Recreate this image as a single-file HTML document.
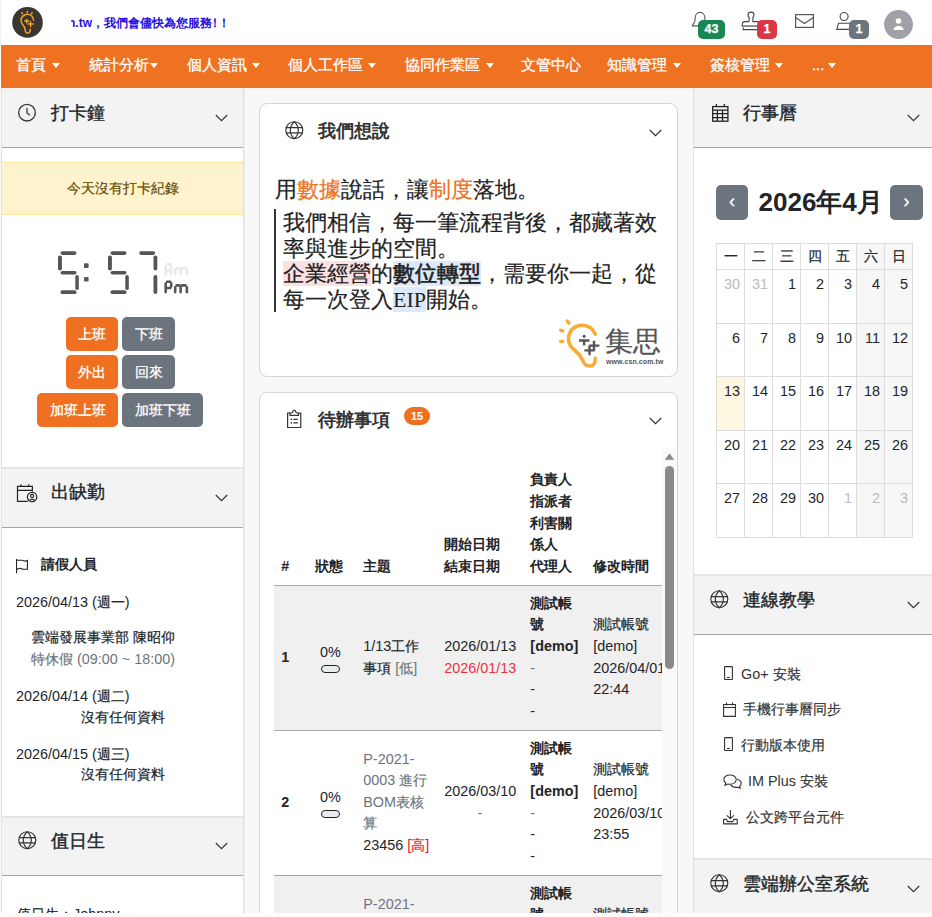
<!DOCTYPE html>
<html><head><meta charset="utf-8">
<style>
*{box-sizing:border-box;margin:0;padding:0}
html,body{width:932px;height:917px;overflow:hidden;background:#fff}
body{position:relative;font-family:"Liberation Sans",sans-serif;font-size:14.4px;line-height:1.5;color:#212529}
.a{position:absolute}
.nw{white-space:nowrap}
/* top header */
#top{left:0;top:0;width:932px;height:45px;background:#fff;border-left:1px solid #f2f2f2}
#nav{left:1px;top:45px;width:931px;height:43px;background:#ee7222}
.ni{top:10px;color:#fff;font-size:14.8px;line-height:21px;white-space:nowrap;-webkit-text-stroke:0.3px #fff}
.car{position:absolute;top:17.5px;width:0;height:0;border-left:4px solid transparent;border-right:4px solid transparent;border-top:5px solid #fff}
#main{left:0;top:88px;width:932px;height:825px;background:#f8f8f8}
#bot{left:0;top:913px;width:932px;height:4px;background:#fcfcfc}
.col{background:#fff;overflow:hidden}
.hd{position:absolute;left:0;background:#f3f3f3;border-bottom:1px solid #a3a3ab}
.hdt{position:absolute;font-size:18px;line-height:24px;color:#212529;font-weight:400;-webkit-text-stroke:0.4px #212529;white-space:nowrap}
.sep{position:absolute;left:0;height:2px;background:#e5e5e7}
.chev{position:absolute;width:13px;height:8px}
.card{position:absolute;background:#fff;border:1px solid #d6d6da;border-radius:8px;overflow:hidden}
.btn{position:absolute;height:34px;border-radius:5px;color:#fff;font-size:14.4px;line-height:34px;text-align:center;white-space:nowrap;-webkit-text-stroke:0.3px #fff}
.bo{background:#ee7020}
.bg{background:#6c757d}

.tt{border-collapse:collapse;table-layout:fixed;width:411.9px;font-size:14.4px;line-height:21.6px;color:#212529}
.tt td{padding:0 7.2px;vertical-align:middle;white-space:nowrap;overflow:hidden}
.th td{font-weight:bold;vertical-align:bottom;padding-bottom:7.2px;border-bottom:1px solid #aaa}
.r1 td{background:#f0f0f0;border-bottom:1px solid #aaa}
.r2 td{background:#fff;border-bottom:1px solid #aaa}
.tt td.c{text-align:center}
.gy{color:#6c757d}
.rd{color:#e8334a}
.rd2{color:#e8182c}

.cal{border-collapse:collapse;table-layout:fixed;font-size:14.4px;color:#212529}
.cal td{width:28px;border:1px solid #ddd;text-align:right;vertical-align:top;padding:4px 4px 0 0;height:53.6px;line-height:21.6px}
.cal tr.ch td{height:26px;text-align:center;padding:0;line-height:24px}
.cal td.we{background:#f7f7f7}
.cal td.ot{color:#bbb}
.cal td.td{background:#fff8e0}
[style*="font-weight:bold"],b,.th td{-webkit-text-stroke:0}
.k{-webkit-text-stroke:0.2px currentColor}
.hdt .k,.ni .k,.btn .k,[style*="text-stroke"] .k{-webkit-text-stroke:inherit}
b .k,.th .k,[style*="font-weight:bold"] .k{-webkit-text-stroke:0}
</style></head><body>
<div id="top" class="a"></div>
<div id="nav" class="a"></div>

<!-- logo -->
<svg class="a" style="left:12px;top:7px" width="31" height="31" viewBox="0 0 31 31">
<circle cx="15.5" cy="15.4" r="15.3" fill="#3a3632"/>
<g fill="none" stroke="#f5a21f" stroke-width="1.5" stroke-linecap="round">
<path d="M21.6 13.2C21 9.5 18.5 7.3 15.4 7.3C11.8 7.3 9 10 9 13.5C9 16.3 11 18 12.3 20C13.2 21.5 13.2 23.5 13.5 24.5C13.9 25.8 14.7 26.2 15.6 26.2C17 26.2 18.3 25 18.3 22.3"/>
<path d="M9.9 5.6l.5 1M15.4 4.6v.8M20 5.6l-.5 1"/>
<path d="M12.8 14.1h3.8M14.7 12.4v3.4M16 17.1h5.2M18.6 14.8v4.8"/>
</g>
</svg>
<div class="a" style="left:71px;top:14px;width:170px;height:18px;overflow:hidden">
<div class="a nw" style="left:-3px;top:0;font-size:12px;line-height:18px;font-weight:bold;color:#2a10e0">n.tw<span class="k">，我們會儘快為您服務</span><span style="margin-left:-3.5px;letter-spacing:-2.5px"><span class="k">！！</span></span></div>
</div>
<!-- bell -->
<svg class="a" style="left:690px;top:11px" width="20" height="18" viewBox="0 0 20 18">
<path d="M2.4 14.9C2.4 13.6 3.3 13 4.5 11.5C5 10.8 5.1 9 5.1 7.5C5.1 4 7.2 1.5 10 1.3C12.8 1.5 14.9 4 14.9 7.5C14.9 9 15 10.8 15.5 11.5C16.7 13 17.6 13.6 17.6 14.9Z" fill="none" stroke="#555" stroke-width="1.1"/>
</svg>
<div class="a" style="left:698px;top:20px;width:27px;height:19px;background:#198754;border-radius:5px;color:#fff;font-weight:bold;font-size:12.5px;line-height:19px;text-align:center;-webkit-text-stroke:0.25px #fff">43</div>
<!-- stamp -->
<svg class="a" style="left:741px;top:11px" width="20" height="20" viewBox="0 0 20 20">
<path d="M8.1 10.6V6.2C7.3 5.6 7 4.8 7 4C7 2.3 8.3 1.1 10 1.1C11.7 1.1 13 2.3 13 4C13 4.8 12.7 5.6 11.9 6.2V10.6H19M8.1 10.6H4C2.5 10.6 1.3 11.8 1.3 13.3V15.2H19" fill="none" stroke="#444" stroke-width="1.1"/>
<path d="M2.2 16.4V18.6H19" fill="none" stroke="#444" stroke-width="1.1"/>
<path d="M2 14.8H19" stroke="#999" stroke-width="1.4"/>
</svg>
<div class="a" style="left:757px;top:20px;width:20px;height:19px;background:#dc3545;border-radius:5px;color:#fff;font-weight:bold;font-size:12.5px;line-height:19px;text-align:center;-webkit-text-stroke:0.25px #fff">1</div>
<!-- mail -->
<svg class="a" style="left:795px;top:14px" width="19" height="14" viewBox="0 0 19 14">
<rect x="0.6" y="0.6" width="17.8" height="12.8" fill="none" stroke="#555" stroke-width="1.2"/>
<path d="M0.6 3.6l8.9 6 8.9-6" fill="none" stroke="#555" stroke-width="1.2"/>
</svg>
<!-- person -->
<svg class="a" style="left:836px;top:12px" width="16" height="18" viewBox="0 0 16 18">
<circle cx="8.1" cy="4.5" r="4" fill="none" stroke="#444" stroke-width="1.1"/>
<path d="M16 11.2H2.5L0.8 17.4H16" fill="none" stroke="#444" stroke-width="1.1"/>
</svg>
<div class="a" style="left:849px;top:20px;width:20px;height:19px;background:#6c757d;border-radius:5px;color:#fff;font-weight:bold;font-size:12.5px;line-height:19px;text-align:center;-webkit-text-stroke:0.25px #fff">1</div>
<!-- avatar -->
<svg class="a" style="left:884px;top:10px" width="29" height="29" viewBox="0 0 29 29">
<circle cx="14.5" cy="14.5" r="14.4" fill="#9fa0a8"/>
<circle cx="14.5" cy="11" r="2.8" fill="#fff"/>
<path d="M9.5 20c0-2.8 2.2-4 5-4s5 1.2 5 4z" fill="#fff"/>
</svg>
<div id="main" class="a"></div>
<div class="a" style="left:0;top:45px;width:932px;height:43px">
<div class="a ni" style="left:16px"><span class="k">首頁</span></div><div class="car" style="left:52px"></div>
<div class="a ni" style="left:89px"><span class="k">統計分析</span></div><div class="car" style="left:150px"></div>
<div class="a ni" style="left:187px"><span class="k">個人資訊</span></div><div class="car" style="left:252px"></div>
<div class="a ni" style="left:288px"><span class="k">個人工作區</span></div><div class="car" style="left:368px"></div>
<div class="a ni" style="left:405px"><span class="k">協同作業區</span></div><div class="car" style="left:486px"></div>
<div class="a ni" style="left:521px"><span class="k">文管中心</span></div>
<div class="a ni" style="left:607px"><span class="k">知識管理</span></div><div class="car" style="left:673px"></div>
<div class="a ni" style="left:710px"><span class="k">簽核管理</span></div><div class="car" style="left:775px"></div>
<div class="a ni" style="left:812px">...</div><div class="car" style="left:828px"></div>
</div>


<!-- LEFT COLUMN -->
<div class="a col" style="left:1px;top:88px;width:243px;height:825px;border-left:1px solid #e2e2e8;border-right:1px solid #dfdfe5"></div><div class="a" style="left:244px;top:88px;width:1px;height:825px;background:#ededf0"></div>
<div class="a" style="left:2px;top:88px;width:241px;height:825px;overflow:hidden">
 <div class="hd" style="top:0;width:241px;height:60px"></div>
 <svg class="a" style="left:16px;top:15px" width="20" height="20" viewBox="0 0 20 20"><circle cx="9" cy="9.7" r="8.3" fill="none" stroke="#333" stroke-width="1.3"/><path d="M9 5v5l3 2.2" fill="none" stroke="#333" stroke-width="1.3"/></svg>
 <div class="hdt" style="left:49px;top:13px"><span class="k">打卡鐘</span></div>
 <svg class="chev" style="left:213px;top:26px" width="13" height="8" viewBox="0 0 13 8"><path d="M0.8 1l5.7 5.6L12.2 1" fill="none" stroke="#333" stroke-width="1.15"/></svg>
 <div class="a" style="left:0;top:74px;width:241px;height:53px;background:#fff3cd;border-top:1px solid #ffe69c;border-bottom:1px solid #ffe69c;color:#664d03;text-align:center;font-size:14.4px;line-height:51px"><span class="k">今天沒有打卡紀錄</span></div>
 <!-- clock -->
 <svg class="a" style="left:48px;top:160px" width="145" height="50" viewBox="0 0 145 50">
  <g fill="#555">
   <!-- digit 5 at x=8 -->
   <rect x="10.5" y="3.3" width="16" height="3.6" rx="1.8"/>
   <rect x="8" y="7.4" width="3.9" height="15" rx="1.9"/>
   <rect x="10.5" y="23" width="16" height="3.5" rx="1.75"/>
   <rect x="25.3" y="27" width="3.5" height="15" rx="1.75"/>
   <rect x="10.5" y="42.3" width="16" height="3.7" rx="1.85"/>
   <rect x="34" y="15.3" width="4.6" height="4.6" rx="1"/>
   <rect x="34" y="29" width="4.6" height="4.6" rx="1"/>
   <!-- digit 5 at x=58 -->
   <rect x="60.5" y="3.3" width="16" height="3.6" rx="1.8"/>
   <rect x="58" y="7.4" width="3.9" height="15" rx="1.9"/>
   <rect x="60.5" y="23" width="16" height="3.5" rx="1.75"/>
   <rect x="75.3" y="27" width="3.5" height="15" rx="1.75"/>
   <rect x="60.5" y="42.3" width="16" height="3.7" rx="1.85"/>
   <!-- digit 7 at x=86.7 -->
   <rect x="89.2" y="3.3" width="16" height="3.6" rx="1.8"/>
   <rect x="103.5" y="7.4" width="3.8" height="15" rx="1.9"/>
   <rect x="103.5" y="27" width="3.8" height="19" rx="1.9"/>
  </g>
  <g fill="none" stroke-width="2.6" stroke-linecap="round">
   <path d="M115.7 18.6L115.7 26.2M117.2 16.4L120.2 16.4M121.2 18.6L121.2 26.2M117.2 22.4L120.2 22.4M125.2 21.6L125.2 26.2M126.6 20.2L129.3 20.2M130.6 21.6L130.6 26.2M132 20.2L135.5 20.2M136.9 21.6L136.9 26.2" stroke="#e9e9e9"/>
   <path d="M115.7 35.6L115.7 44.1M117.2 33.8L120.2 33.8M121.2 35.4L121.2 38.4M117.2 40L120.2 40M125.2 39.2L125.2 44.1M126.6 37.4L129.3 37.4M130.6 39.2L130.6 44.1M132 37.4L135.5 37.4M136.9 39.2L136.9 44.1" stroke="#555"/>
  </g></svg>

 <div class="btn bo" style="left:64px;top:229px;width:52px"><span class="k">上班</span></div>
 <div class="btn bg" style="left:120px;top:229px;width:53px"><span class="k">下班</span></div>
 <div class="btn bo" style="left:64px;top:267px;width:52px"><span class="k">外出</span></div>
 <div class="btn bg" style="left:120px;top:267px;width:53px"><span class="k">回來</span></div>
 <div class="btn bo" style="left:35px;top:305px;width:81px"><span class="k">加班上班</span></div>
 <div class="btn bg" style="left:120px;top:305px;width:81px"><span class="k">加班下班</span></div>

 <div class="sep" style="top:379px;width:241px"></div>
 <div class="hd" style="top:381px;width:241px;height:59px"></div>
 <svg class="a" style="left:14px;top:395px" width="24" height="22" viewBox="0 0 24 22"><path d="M11.8 18.4H1.5V3.4h14.9v5.2M1.5 7.3h14.9M5 1.2v2.2M12.7 1.2v2.2" fill="none" stroke="#222" stroke-width="1.2"/><circle cx="16.1" cy="14" r="4.7" fill="none" stroke="#222" stroke-width="1.2"/><circle cx="16.1" cy="12.9" r="1.5" fill="none" stroke="#222" stroke-width="1.1"/><path d="M13.4 17.6c.7-1 1.6-1.5 2.7-1.5s2 .5 2.7 1.5" fill="none" stroke="#222" stroke-width="1.1"/></svg>
 <div class="hdt" style="left:49px;top:392px"><span class="k">出缺勤</span></div>
 <svg class="chev" style="left:213px;top:406px" width="13" height="8" viewBox="0 0 13 8"><path d="M0.8 1l5.7 5.6L12.2 1" fill="none" stroke="#333" stroke-width="1.15"/></svg>

 <svg class="a" style="left:14px;top:471px" width="14" height="15" viewBox="0 0 14 15"><path d="M0.5 0V14.2" fill="none" stroke="#222" stroke-width="1.1"/><path d="M0.5 1.3H6.3C7.6 1.3 7.8 2.1 9 2.1S10.3 1.3 11.4 1.3V10.2H7C5.8 10.2 5.4 9.2 4 9.2S2 10.2 0.5 10.2" fill="none" stroke="#222" stroke-width="1.1"/></svg>
 <div class="a nw" style="left:39px;top:466px;font-weight:bold"><span class="k">請假人員</span></div>
 <div class="a nw" style="left:14px;top:504px">2026/04/13 (<span class="k">週一</span>)</div>
 <div class="a nw" style="left:29px;top:539px"><span class="k">雲端發展事業部</span> <span class="k">陳昭仰</span></div>
 <div class="a nw" style="left:29px;top:561px;color:#6c757d"><span class="k">特休假</span> (09:00 ~ 18:00)</div>
 <div class="a nw" style="left:14px;top:598px">2026/04/14 (<span class="k">週二</span>)</div>
 <div class="a nw" style="left:0;width:241px;text-align:center;top:619px"><span class="k">沒有任何資料</span></div>
 <div class="a nw" style="left:14px;top:656px">2026/04/15 (<span class="k">週三</span>)</div>
 <div class="a nw" style="left:0;width:241px;text-align:center;top:676px"><span class="k">沒有任何資料</span></div>

 <div class="sep" style="top:728px;width:241px"></div>
 <div class="hd" style="top:730px;width:241px;height:58px"></div>
 <svg class="a" style="left:16px;top:743px" width="20" height="20" viewBox="0 0 20 20"><g fill="none" stroke="#333" stroke-width="1.15"><circle cx="9.3" cy="9.2" r="8.5"/><path d="M9.3 0.7C6.5 3.2 5.3 6.2 5.3 9.2S6.5 15.2 9.3 17.7C12.1 15.2 13.3 12.2 13.3 9.2S12.1 3.2 9.3 0.7zM1.1 6.6H17.5M1.1 11.8H17.5"/></g></svg>
 <div class="hdt" style="left:49px;top:741px"><span class="k">值日生</span></div>
 <svg class="chev" style="left:213px;top:754px" width="13" height="8" viewBox="0 0 13 8"><path d="M0.8 1l5.7 5.6L12.2 1" fill="none" stroke="#333" stroke-width="1.15"/></svg>
 <div class="a nw" style="left:15px;top:816px"><span class="k">值日生：</span>Johnny</div>
</div>

<!-- MIDDLE -->
<div class="card" style="left:259px;top:103px;width:419px;height:274px">
 <svg class="a" style="left:25px;top:17px" width="20" height="20" viewBox="0 0 20 20"><g fill="none" stroke="#333" stroke-width="1.15"><circle cx="9.3" cy="9.2" r="8.5"/><path d="M9.3 0.7C6.5 3.2 5.3 6.2 5.3 9.2S6.5 15.2 9.3 17.7C12.1 15.2 13.3 12.2 13.3 9.2S12.1 3.2 9.3 0.7zM1.1 6.6H17.5M1.1 11.8H17.5"/></g></svg>
 <div class="a nw" style="left:58px;top:15px;font-size:18px;line-height:24px;font-weight:bold;color:#333"><span class="k">我們想說</span></div>
 <svg class="chev" style="left:389px;top:25px" width="13" height="8" viewBox="0 0 13 8"><path d="M0.8 1l5.7 5.6L12.2 1" fill="none" stroke="#333" stroke-width="1.15"/></svg>
 <div class="a nw" style="left:15px;top:73px;font-family:'Liberation Serif',serif;font-size:22px;line-height:25.5px;color:#222"><span class="k">用</span><span style="color:#ee7222"><span class="k">數據</span></span><span class="k">說話，讓</span><span style="color:#ee7222"><span class="k">制度</span></span><span class="k">落地。</span></div>
 <div class="a" style="left:14px;top:105px;width:2px;height:103px;background:#333"></div>
 <div class="a" style="left:23px;top:106px;width:378px;font-family:'Liberation Serif',serif;font-size:22px;line-height:25.5px;color:#222"><span class="k">我們相信，每一筆流程背後，都藏著效率與進步的空間。</span><br><span style="background:#fde0e2"><span class="k">企業經營</span></span><span class="k">的</span><span style="background:#dce9f8;-webkit-text-stroke:0.6px #222"><span class="k">數位轉型</span></span><span class="k">，需要你一起，從每一次登入</span><span style="background:#dce9f8">EIP</span><span class="k">開始。</span></div>
 <!-- csn logo -->
 <svg class="a" style="left:295px;top:211px" width="50" height="55" viewBox="0 0 50 55">
  <path d="M40.2 19.2C38 13.5 33 10.2 27 10.2C19 10.2 13.5 16.5 13.5 24C13.5 29.5 16.5 33 20.5 36C24 38.6 25.5 40.5 27.5 45C29 49.5 31.5 51 34.8 51C38.5 51 40.5 48 40.2 43.2" fill="none" stroke="#f9ab35" stroke-width="3.6" stroke-linecap="round"/>
  <path d="M12.3 6L13.8 8.1M5.7 15.3L7.8 15.9M5.7 26.4H7.8" fill="none" stroke="#f9ab35" stroke-width="3.4" stroke-linecap="round"/>
  <circle cx="29.1" cy="21.3" r="1.5" fill="#555"/>
  <path d="M24 25.5h10.5M29.1 25.5v5.1M34.2 30.6h10.2M29.4 35.4h10.2M34.5 30.6v9.6M39 25.8v9.6" fill="none" stroke="#555" stroke-width="2.4"/>
 </svg>
 <div class="a nw" style="left:345px;top:222px;font-size:28px;line-height:32px;color:#555"><span class="k">集思</span></div>
 <div class="a nw" style="left:346px;top:254px;font-size:7px;line-height:8px;font-weight:bold;color:#555;letter-spacing:0.1px">www.csn.com.tw</div>
</div>

<div class="card" style="left:259px;top:392px;width:419px;height:540px;border-radius:8px 8px 0 0">
 <svg class="a" style="left:26px;top:16px" width="17" height="20" viewBox="0 0 17 20"><g fill="none" stroke="#333" stroke-width="1.2"><path d="M4 4.2H1.6v14.3h13.2V4.2h-2.2"/><path d="M4 6.4h8.6L12.4 4.3 10.2 3.6C9.8 2 9.1 1.2 8.3 1.2S6.8 2 6.3 3.6L4.2 4.3z"/><path d="M7.3 10.4h4.5M7.3 13.9h4.5"/></g><g fill="#333"><circle cx="5.3" cy="10.4" r=".8"/><circle cx="5.3" cy="13.9" r=".8"/></g></svg>
 <div class="a nw" style="left:58px;top:15px;font-size:18px;line-height:24px;font-weight:bold;color:#333"><span class="k">待辦事項</span></div>
 <div class="a" style="left:144px;top:14px;width:26px;height:18px;border-radius:9px;background:#ee7020;color:#fff;font-size:11px;font-weight:bold;line-height:18px;text-align:center">15</div>
 <div class="a" style="left:14px;top:59px;width:389px;height:470px;overflow:hidden">
 <table class="tt" style="position:absolute;left:0;top:17px">
  <colgroup><col style="width:34.2px"><col style="width:47.9px"><col style="width:80.9px"><col style="width:86.2px"><col style="width:62.8px"><col style="width:100px"></colgroup>
  <tr class="th" style="height:116px"><td>#</td><td><span class="k">狀態</span></td><td><span class="k">主題</span></td><td><span class="k">開始日期</span><br><span class="k">結束日期</span></td><td><span class="k">負責人</span><br><span class="k">指派者</span><br><span class="k">利害關</span><br><span class="k">係人</span><br><span class="k">代理人</span></td><td><span class="k">修改時間</span></td></tr>
  <tr class="r1" style="height:145px"><td><b>1</b></td><td><div style="margin-left:4.5px">0%<div style="width:19px;height:8px;border:1.3px solid #222;border-radius:4px;background:#e9ecef;margin:1px 0 0 1px"></div></div></td><td>1/13<span class="k">工作</span><br><span class="k">事項</span> <span class="gy">[<span class="k">低</span>]</span></td><td class="c">2026/01/13<br><span class="rd">2026/01/13</span></td><td><b><span class="k">測試帳</span><br><span class="k">號</span><br>[demo]</b><br><span class="gy">-</span><br>-<br>-</td><td><span class="k">測試帳號</span><br>[demo]<br>2026/04/01<br>22:44</td></tr>
  <tr class="r2" style="height:145px"><td><b>2</b></td><td><div style="margin-left:4.5px">0%<div style="width:19px;height:8px;border:1.3px solid #222;border-radius:4px;background:#e9ecef;margin:1px 0 0 1px"></div></div></td><td><span class="gy">P-2021-<br>0003 <span class="k">進行</span><br>BOM<span class="k">表核</span><br><span class="k">算</span></span><br>23456 <span class="rd2">[<span class="k">高</span>]</span></td><td class="c">2026/03/10<br><span class="rd">-</span></td><td><b><span class="k">測試帳</span><br><span class="k">號</span><br>[demo]</b><br><span class="gy">-</span><br>-<br>-</td><td><span class="k">測試帳號</span><br>[demo]<br>2026/03/10<br>23:55</td></tr>
  <tr class="r1" style="height:145px"><td><b>3</b></td><td><div style="margin-left:4.5px">0%<div style="width:19px;height:8px;border:1.3px solid #222;border-radius:4px;background:#e9ecef;margin:1px 0 0 1px"></div></div></td><td><span class="gy">P-2021-<br>0004 <span class="k">進行</span><br>BOM<span class="k">表核</span><br><span class="k">算</span></span><br>23456 <span class="rd2">[<span class="k">高</span>]</span></td><td class="c">2026/03/10<br><span class="rd">-</span></td><td><b><span class="k">測試帳</span><br><span class="k">號</span><br>[demo]</b><br><span class="gy">-</span><br>-<br>-</td><td><span class="k">測試帳號</span><br>[demo]<br>2026/03/10<br>23:55</td></tr>
 </table>
 </div>
 <!-- scrollbar -->
 <div class="a" style="left:402px;top:55px;width:15px;height:470px;background:#fafafa"></div>
 <svg class="a" style="left:405px;top:60px" width="11" height="8" viewBox="0 0 11 8"><path d="M4.5 0.8L8.8 6.6H0.2z" fill="#8a8a8a" stroke="#8a8a8a" stroke-width="0.6" stroke-linejoin="round"/></svg>
 <div class="a" style="left:405px;top:73px;width:9px;height:203px;border-radius:5px;background:#8a8a8a"></div>

 <svg class="chev" style="left:389px;top:24px" width="13" height="8" viewBox="0 0 13 8"><path d="M0.8 1l5.7 5.6L12.2 1" fill="none" stroke="#333" stroke-width="1.15"/></svg>
</div>

<!-- RIGHT COLUMN -->
<div class="a col" style="left:693px;top:88px;width:239px;height:825px;border-left:1px solid #e0e0e5"></div>
<div class="a" style="left:694px;top:88px;width:238px;height:825px;overflow:hidden">
 <div class="hd" style="top:0;width:238px;height:60px"></div>
 <svg class="a" style="left:18px;top:16px" width="17" height="19" viewBox="0 0 17 19"><g fill="none" stroke="#222" stroke-width="1.3"><rect x="0.7" y="2.6" width="15.2" height="14.6"/><path d="M0.7 6.2h15.2M0.7 9.7h15.2M0.7 13.6h15.2M5.4 6.2v11M10.5 6.2v11M4.4 0v2.6M12.3 0v2.6"/></g></svg>
 <div class="hdt" style="left:49px;top:13px"><span class="k">行事曆</span></div>
 <svg class="chev" style="left:213px;top:26px" width="13" height="8" viewBox="0 0 13 8"><path d="M0.8 1l5.7 5.6L12.2 1" fill="none" stroke="#333" stroke-width="1.15"/></svg>
 <div class="btn bg" style="left:22px;top:97px;width:32px;height:35px;line-height:33px;font-size:18px">‹</div>
 <div class="a nw" style="left:64.5px;top:96.5px;font-size:26px;line-height:35px;font-weight:bold;color:#212529">2026<span class="k">年</span>4<span class="k">月</span></div>
 <div class="btn bg" style="left:196px;top:97px;width:33px;height:35px;line-height:33px;font-size:18px">›</div>
 <div class="a" style="left:22px;top:155px"><table class="cal"><tr class="ch"><td><span class="k">一</span></td><td><span class="k">二</span></td><td><span class="k">三</span></td><td><span class="k">四</span></td><td><span class="k">五</span></td><td class=we><span class="k">六</span></td><td class=we><span class="k">日</span></td></tr><tr><td class="ot">30</td><td class="ot">31</td><td class="">1</td><td class="">2</td><td class="">3</td><td class="we">4</td><td class="we">5</td></tr><tr><td class="">6</td><td class="">7</td><td class="">8</td><td class="">9</td><td class="">10</td><td class="we">11</td><td class="we">12</td></tr><tr><td class="td">13</td><td class="">14</td><td class="">15</td><td class="">16</td><td class="">17</td><td class="we">18</td><td class="we">19</td></tr><tr><td class="">20</td><td class="">21</td><td class="">22</td><td class="">23</td><td class="">24</td><td class="we">25</td><td class="we">26</td></tr><tr><td class="">27</td><td class="">28</td><td class="">29</td><td class="">30</td><td class="ot">1</td><td class="we ot">2</td><td class="we ot">3</td></tr></table></div>

 <div class="sep" style="top:486px;width:238px"></div>
 <div class="hd" style="top:488px;width:238px;height:59px"></div>
 <svg class="a" style="left:16px;top:502px" width="20" height="20" viewBox="0 0 20 20"><g fill="none" stroke="#333" stroke-width="1.15"><circle cx="9.3" cy="9.2" r="8.5"/><path d="M9.3 0.7C6.5 3.2 5.3 6.2 5.3 9.2S6.5 15.2 9.3 17.7C12.1 15.2 13.3 12.2 13.3 9.2S12.1 3.2 9.3 0.7zM1.1 6.6H17.5M1.1 11.8H17.5"/></g></svg>
 <div class="hdt" style="left:49px;top:500px"><span class="k">連線教學</span></div>
 <svg class="chev" style="left:213px;top:513px" width="13" height="8" viewBox="0 0 13 8"><path d="M0.8 1l5.7 5.6L12.2 1" fill="none" stroke="#333" stroke-width="1.15"/></svg>
 <div class="a" style="left:0;top:579px"><div class="a" style="left:0;top:0px"><svg class="a" style="left:29px;top:-1px" width="11" height="15" viewBox="0 0 11 15"><rect x="1.6" y="0.6" width="7.8" height="12.9" rx="0.4" fill="none" stroke="#333" stroke-width="1.1"/><path d="M4 11.5h2.8" stroke="#333" stroke-width="1.1"/></svg></div><div class="a nw" style="left:47px;top:-3px;color:#333">Go+ <span class="k">安裝</span></div></div>
 <div class="a" style="left:0;top:614px"><div class="a" style="left:0;top:0px"><svg class="a" style="left:29px;top:0px" width="13" height="15" viewBox="0 0 13 15"><path d="M0.6 2.5h11.8v11.9H0.6zM0.6 5.5h11.8M3.5 0.5v3M9.5 0.5v3" fill="none" stroke="#333" stroke-width="1.1"/></svg></div><div class="a nw" style="left:49px;top:-3px;color:#333"><span class="k">手機行事曆同步</span></div></div>
 <div class="a" style="left:0;top:650px"><div class="a" style="left:0;top:0px"><svg class="a" style="left:29px;top:-1px" width="11" height="15" viewBox="0 0 11 15"><rect x="1.6" y="0.6" width="7.8" height="12.9" rx="0.4" fill="none" stroke="#333" stroke-width="1.1"/><path d="M4 11.5h2.8" stroke="#333" stroke-width="1.1"/></svg></div><div class="a nw" style="left:47px;top:-3px;color:#333"><span class="k">行動版本使用</span></div></div>
 <div class="a" style="left:0;top:686px"><div class="a" style="left:0;top:0px"><svg class="a" style="left:29px;top:0px" width="19" height="15" viewBox="0 0 19 15"><path d="M7 1C3.5 1 0.8 3 0.8 5.5c0 1.4.8 2.6 2 3.4L2 11.3l3-1.3c.6.1 1.3.2 2 .2 3.5 0 6.2-2 6.2-4.7S10.5 1 7 1z" fill="none" stroke="#333" stroke-width="1.1"/><path d="M14 5.2c2.4.6 4.2 2.2 4.2 4.2 0 1.1-.6 2.1-1.6 2.8l.6 2-2.5-1c-.5.1-1.1.2-1.7.2-2.3 0-4.3-1-5.2-2.5" fill="none" stroke="#333" stroke-width="1.1"/></svg></div><div class="a nw" style="left:54px;top:-3px;color:#333">IM Plus <span class="k">安裝</span></div></div>
 <div class="a" style="left:0;top:722px"><div class="a" style="left:0;top:0px"><svg class="a" style="left:29px;top:0px" width="15" height="15" viewBox="0 0 15 15"><path d="M7.4 0.1V8.2M3.7 5.3L7.4 8.6 10.9 5.3M0.6 9.4H3.5L4.5 11.6H9.8L10.8 9.4H14.2V13.9H0.6Z" fill="none" stroke="#333" stroke-width="1.1" stroke-linejoin="round"/></svg></div><div class="a nw" style="left:52px;top:-3px;color:#333"><span class="k">公文跨平台元件</span></div></div>

 <div class="sep" style="top:770px;width:238px"></div>
 <div class="hd" style="top:772px;width:238px;height:60px"></div>
 <svg class="a" style="left:16px;top:786px" width="20" height="20" viewBox="0 0 20 20"><g fill="none" stroke="#333" stroke-width="1.15"><circle cx="9.3" cy="9.2" r="8.5"/><path d="M9.3 0.7C6.5 3.2 5.3 6.2 5.3 9.2S6.5 15.2 9.3 17.7C12.1 15.2 13.3 12.2 13.3 9.2S12.1 3.2 9.3 0.7zM1.1 6.6H17.5M1.1 11.8H17.5"/></g></svg>
 <div class="hdt" style="left:49px;top:784px"><span class="k">雲端辦公室系統</span></div>
 <svg class="chev" style="left:213px;top:797px" width="13" height="8" viewBox="0 0 13 8"><path d="M0.8 1l5.7 5.6L12.2 1" fill="none" stroke="#333" stroke-width="1.15"/></svg>
</div>
<div id="bot" class="a"></div>
</body></html>
